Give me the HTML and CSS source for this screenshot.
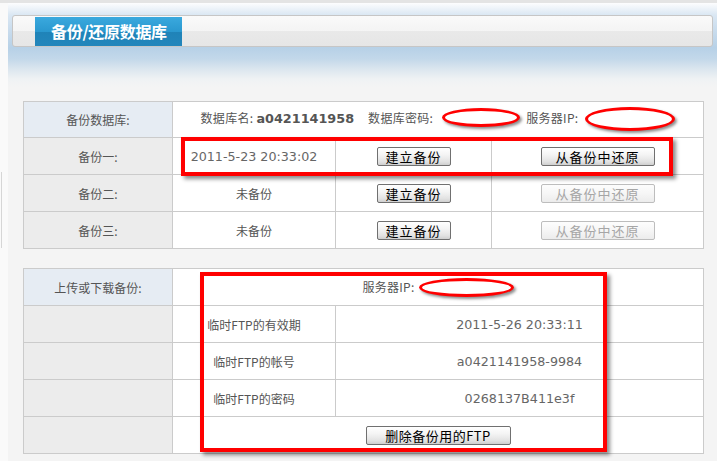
FILE: index.html
```html
<!DOCTYPE html>
<html lang="zh-CN">
<head>
<meta charset="utf-8">
<title>备份/还原数据库</title>
<link rel="stylesheet" href="styles.css">
</head>
<body>
<div class="edge"></div>
<div class="page">
  <div class="headbar">
    <div class="tab">备份/还原数据库</div>
  </div>

  <table class="grid grid-backup">
    <colgroup>
      <col class="c1"><col class="c2"><col class="c3"><col class="c4">
    </colgroup>
    <tr class="first">
      <td class="lbl lbl-blue">备份数据库:</td>
      <td colspan="3" class="info">数据库名: <b class="num">a0421141958</b><span class="gap"></span>数据库密码:<span class="oval oval-a"></span>服务器IP:<span class="oval oval-b"></span></td>
    </tr>
    <tr>
      <td class="lbl">备份一:</td>
      <td class="val num">2011-5-23 20:33:02</td>
      <td><button class="btn btn-make">建立备份</button></td>
      <td><button class="btn btn-restore">从备份中还原</button></td>
    </tr>
    <tr>
      <td class="lbl">备份二:</td>
      <td class="val">未备份</td>
      <td><button class="btn btn-make">建立备份</button></td>
      <td><button class="btn btn-restore" disabled>从备份中还原</button></td>
    </tr>
    <tr>
      <td class="lbl">备份三:</td>
      <td class="val">未备份</td>
      <td><button class="btn btn-make">建立备份</button></td>
      <td><button class="btn btn-restore" disabled>从备份中还原</button></td>
    </tr>
  </table>

  <table class="grid grid-ftp">
    <colgroup>
      <col class="c1"><col class="c2"><col class="c34">
    </colgroup>
    <tr>
      <td class="lbl lbl-blue">上传或下载备份:</td>
      <td colspan="2" class="info">服务器IP:<span class="oval oval-c"></span></td>
    </tr>
    <tr>
      <td class="lbl"></td>
      <td class="val ftp">临时FTP的有效期</td>
      <td class="val num">2011-5-26 20:33:11</td>
    </tr>
    <tr>
      <td class="lbl"></td>
      <td class="val ftp">临时FTP的帐号</td>
      <td class="val num">a0421141958-9984</td>
    </tr>
    <tr>
      <td class="lbl"></td>
      <td class="val ftp">临时FTP的密码</td>
      <td class="val num">0268137B411e3f</td>
    </tr>
    <tr>
      <td class="lbl"></td>
      <td colspan="2"><button class="btn btn-del">删除备份用的FTP</button></td>
    </tr>
  </table>

  <div class="mark mark-row"></div>
  <div class="mark mark-ftp"></div>
</div>
</body>
</html>
```

FILE: styles.css
```css
html, body {
  margin: 0;
  padding: 0;
}
body {
  background: #fafafa;
  border-top: 3px solid #e4e4e4;
  height: 458px;
  overflow: hidden;
  position: relative;
  font-family: "Noto Sans CJK SC", "DejaVu Sans", sans-serif;
}
.edge {
  position: absolute;
  left: 1px;
  top: 169px;
  width: 1px;
  height: 76px;
  background: #d6d6d6;
}
.page {
  position: relative;
  margin-left: 8px;
  height: 458px;
  padding-top: 12px;
  box-sizing: border-box;
  background: linear-gradient(to bottom, #fdfdfe 0px, #dae7f3 12px, #c6daec 30px, #b7d1e7 45px, #c3d8ea 56px, #dbe6ef 66px, #eff2f4 76px, #f4f4f4 84px, #f4f4f4 100%);
}
.headbar {
  margin: 0 4px 0 4px;
  height: 29px;
  border: 1px solid #c6c6c6;
  border-radius: 3px;
  background: linear-gradient(to bottom, #fafafa 0, #f4f4f4 50%, #e9e9e9 50%, #e6e6e6 100%);
  display: flex;
  padding-left: 22px;
  padding-top: 1px;
  box-sizing: content-box;
}
.tab {
  width: 147px;
  height: 29px;
  box-sizing: border-box;
  padding-left: 16px;
  background: linear-gradient(to bottom, #3aa9de 0, #2a98cf 50%, #1f83b8 50%, #2386bb 100%);
  color: #fff;
  font-weight: bold;
  font-size: 16px;
  line-height: 29px;
  letter-spacing: -0.3px;
}
.grid {
  border-collapse: collapse;
  margin-left: 15px;
  width: 680px;
  table-layout: fixed;
  background: #fff;
}
.grid-backup { margin-top: 54px; }
.grid-ftp { margin-top: 19px; }
.grid td {
  border: 1px solid #cbcbcb;
  height: 36px;
  padding: 0;
  text-align: center;
  vertical-align: middle;
  font-size: 12px;
  color: #555;
  white-space: nowrap;
}
.grid tr.first td { height: 35px; }
.c1 { width: 149px; }
.c2 { width: 163px; }
.c3 { width: 156px; }
.c4 { width: 212px; }
.c34 { width: 368px; }
.grid td.lbl {
  background: #ececec;
  color: #555;
}
.grid td.lbl-blue { background: #e6ecf3; }
.info { line-height: 20px; letter-spacing: 0.3px; }
.num {
  font-family: "DejaVu Sans", sans-serif;
  font-size: 12.7px;
  color: #666;
  letter-spacing: 0;
}
.grid td.num { font-size: 12.7px; color: #666; }
b.num {
  font-size: 12.8px;
  color: #555;
}
.gap {
  display: inline-block;
  width: 14px;
}
.val { color: #555; }
.ftp { color: #555; }
.oval {
  display: inline-block;
  vertical-align: middle;
  box-sizing: border-box;
  border: 3px solid #f00;
  border-radius: 50%;
  background: #fff;
  box-shadow: 2px 2px 3px rgba(0, 0, 0, 0.45);
}
.oval-a { width: 78px; height: 19px; margin: -4px 6px 0 9px; }
.oval-b { width: 90px; height: 24px; margin: -2px 0 0 7px; }
.oval-c { width: 95px; height: 19px; margin: -2px 0 0 4px; }
.btn {
  font-family: "Noto Sans CJK SC", sans-serif;
  font-size: 13px;
  height: 19px;
  line-height: 16px;
  padding: 0;
  border: 1px solid #707070;
  border-radius: 2px;
  color: #000;
  background: linear-gradient(to bottom, #ffffff 0, #f4f4f4 40%, #e2e2e2 80%, #cfcfcf 100%);
  letter-spacing: 1px;
  vertical-align: middle;
}
.btn:disabled {
  border-color: #bdbdbd;
  color: #a6a6a6;
  background: linear-gradient(to bottom, #fdfdfd 0, #f6f6f6 50%, #ececec 100%);
}
.btn-make { width: 74px; }
.btn-restore { width: 114px; }
.btn-del { width: 145px; letter-spacing: 0.5px; }
.mark {
  position: absolute;
  box-sizing: border-box;
  border: 4px solid #f00;
  box-shadow: 3px 3px 4px rgba(0, 0, 0, 0.45);
  pointer-events: none;
}
.mark-row {
  left: 173px;
  top: 134px;
  width: 492px;
  height: 39px;
}
.mark-ftp {
  left: 192px;
  top: 269px;
  width: 407px;
  height: 180px;
}
```
